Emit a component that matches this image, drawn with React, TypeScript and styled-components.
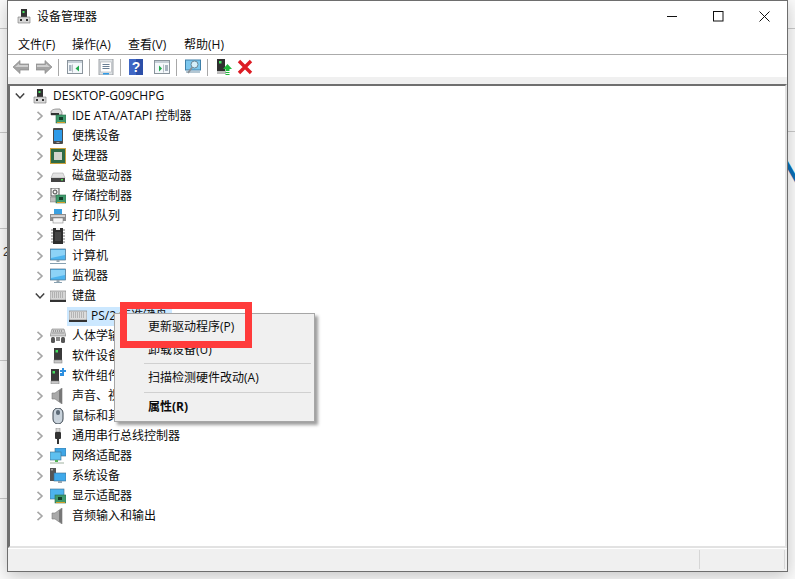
import React from "react";
import styled, { createGlobalStyle } from "styled-components";

const Global = createGlobalStyle`
  html, body { margin: 0; padding: 0; background: #fff; overflow: hidden; }
  #root { width: 795px; height: 579px; }
`;
const FONT = `"Open Sans", "Noto Sans CJK SC", sans-serif`;

const Desktop = styled.div`
  position: relative; width: 795px; height: 579px; overflow: hidden; background: #fbfbfb;
  font-family: ${FONT}; font-size: 12px; color: #0c0c0c;
`;
const BackLine = styled.div<{ $top: number; $right?: boolean }>`
  position: absolute; top: ${p => p.$top}px; height: 1px; width: 8px; background: #c9c9c9;
  ${p => (p.$right ? "right: 0;" : "left: 0;")}
`;
const BackDigit = styled.span`
  position: absolute; left: 3px; top: 245px; font: 12px "Liberation Sans", sans-serif; color: #333;
`;
const BackLetter = styled.span`
  position: absolute; left: 779px; top: 152px; font: 700 35px/40px "Liberation Sans", sans-serif; color: #0a6fb5;
`;
const Window = styled.div`
  position: absolute; left: 7px; top: 0; width: 781px; height: 572px; box-sizing: border-box;
  border: 1px solid #6e6e6e; background: #fff; display: flex; flex-direction: column;
  box-shadow: 0 4px 16px rgba(0,0,0,.22);
`;
const TitleBar = styled.div`
  height: 32px; flex: none; display: flex; align-items: center; padding-left: 8px; gap: 5px; font-size: 12px; padding-bottom: 2px; box-sizing: border-box;
`;
const TitleText = styled.span`flex: 1;`;
const Controls = styled.div`display: flex; align-items: center; margin-right: 17px; gap: 35px;`;
const MenuBar = styled.div`
  height: 22px; flex: none; display: flex; align-items: center; padding-left: 0; box-sizing: border-box;
  border-bottom: 1px solid #ababab;
`;
const MenuItem = styled.span<{ $w?: number }>`
  width: ${p => p.$w ?? 56}px; padding-left: 10px; box-sizing: border-box; white-space: nowrap; font-size: 12px;
`;
const Toolbar = styled.div`
  height: 22px; flex: none; display: flex; align-items: center; padding: 2px 0 0 5px; box-sizing: border-box; background: #fff;
`;
const ToolSep = styled.i`display: block; width: 1px; height: 17px; background: #a8a8a8; margin: 0 8px 0 6px;`;
const ToolBtn = styled.span<{ $gap?: number }>`display: flex; width: 16px; height: 16px; margin-right: ${p => p.$gap ?? 0}px;`;
const Strip = styled.div`height: 7px; flex: none; background: #f0f0f0;`;
const TreePane = styled.div`
  flex: 1; min-height: 0; box-sizing: border-box; background: #fff; position: relative;
  border-top: 2px solid #6f6f6f; border-left: 2px solid #6f6f6f; border-right: 2px solid #e2e2e2; border-bottom: 2px solid #e2e2e2;
`;
const Row = styled.div<{ $indent: number }>`
  height: 20px; display: flex; align-items: center; margin-left: ${p => p.$indent}px; white-space: nowrap;
`;
const Chevron = styled.span`display: flex; width: 14px; height: 20px; align-items: center; justify-content: center; flex: none;`;
const IconSlot = styled.span<{ $before?: number; $after?: number }>`
  display: flex; width: 18px; height: 16px; justify-content: center; flex: none;
  margin-left: ${p => p.$before ?? 0}px; margin-right: ${p => p.$after ?? 4}px;
`;
const Label = styled.span`line-height: 20px; padding-bottom: 1px; font-size: 12px;`;
const SelectedLabel = styled.span`
  display: flex; align-items: center; height: 19px; width: 105px; background: #cce8ff; padding-left: 2px; box-sizing: border-box; white-space: nowrap;
`;
const StatusBar = styled.div`
  height: 22px; flex: none; display: flex; justify-content: flex-end; background: #f0f0f0; border-top: 1px solid #fff;
`;
const StatusCell = styled.div<{ $w: number }>`
  width: ${p => p.$w}px; box-sizing: border-box; border-right: 1px solid #d6d6d6; border-left: 1px solid #d6d6d6; margin: 1px 2px 2px 0;
`;
const Menu = styled.div`
  position: absolute; left: 114px; top: 313px; width: 201px; height: 109px; box-sizing: border-box;
  background: #f0f0f0; border: 1px solid #a6a6a6; box-shadow: 3px 3px 3px rgba(0,0,0,.38);
  padding: 1px 2px 0 2px; display: flex; flex-direction: column;
`;
const MenuRow = styled.div<{ $bold?: boolean; $h: number }>`
  height: ${p => p.$h}px; line-height: ${p => p.$h}px; padding-left: 31px; font-size: 12px; flex: none; white-space: nowrap;
  font-weight: ${p => (p.$bold ? 700 : 400)};
`;
const MenuSep = styled.div<{ $top?: number }>`
  height: 1px; background: #d0d0d0; margin: ${p => p.$top ?? 0}px 1px 0 27px; flex: none;
`;
const RedFrame = styled.div`
  position: absolute; left: 120px; top: 302px; width: 132px; height: 46px; box-sizing: border-box;
  border: 7px solid #ff3b3b;
`;

const Svg = ({ children, w = 16, h = 16 }: { children: React.ReactNode; w?: number; h?: number }) => (
  <svg width={w} height={h} viewBox={`0 0 ${w} ${h}`}>{children}</svg>
);

const ChevronRight = () => (
  <svg width="8" height="10" viewBox="0 0 8 10"><path d="M1.5 .8 6 5 1.5 9.2" fill="none" stroke="#a6a6a6" strokeWidth="1.6" /></svg>
);
const ChevronDown = () => (
  <svg width="10" height="8" viewBox="0 0 10 8"><path d="M.8 1.5 5 6 9.2 1.5" fill="none" stroke="#404040" strokeWidth="1.5" /></svg>
);

const Tower = () => (
  <Svg><path d="M5 1h6v9H5z" fill="#333" /><rect x="6.5" y="3" width="2" height="2" fill="#48e060" /><path d="M2 9h12v6H2z" fill="#d8d8d8" stroke="#777" strokeWidth=".6" /><rect x="4" y="11" width="2" height="2" fill="#333" /><rect x="10" y="11" width="2" height="2" fill="#333" /></Svg>
);
const Board = ({ x = 6, y = 7 }: { x?: number; y?: number }) => (
  <g><rect x={x} y={y} width="10" height="8" fill="#3f9a6d" stroke="#2b6f4a" strokeWidth=".6" /><rect x={x + 3} y={y + 2} width="4" height="3" fill="#143d2a" /><rect x={x + 1} y={y + 7} width="8" height="1" fill="#d8a02a" /></g>
);
const Ide = () => (
  <Svg><path d="M1 4c0-2 3-3 6-3h3l2 3v3H1z" fill="#d9d9d9" stroke="#666" strokeWidth=".6" /><rect x="1" y="5" width="8" height="2" fill="#333" /><Board /></Svg>
);
const Portable = () => (
  <Svg><rect x="3" y="0" width="10" height="16" rx="1" fill="#4a4a4a" /><rect x="4" y="2" width="8" height="11" fill="#2f9be8" /><rect x="6.5" y="14" width="3" height="1" fill="#aaa" /></Svg>
);
const Cpu = () => (
  <Svg><rect x="0" y="0" width="16" height="16" fill="#c9a23c" /><rect x="1" y="1" width="14" height="14" fill="#2f6b46" /><rect x="4" y="4" width="8" height="8" fill="#d4d4cc" /></Svg>
);
const Disk = () => (
  <Svg><path d="M3 5h10l2 5H1z" fill="#e2e2e2" stroke="#9a9a9a" strokeWidth=".5" /><rect x="1" y="10" width="14" height="4" fill="#444" /><rect x="11" y="11" width="2" height="1.5" fill="#4ce04c" /></Svg>
);
const Storage = () => (
  <Svg><rect x="1" y="0" width="8" height="8" fill="#f2f2f2" stroke="#555" /><circle cx="5" cy="4" r="2" fill="none" stroke="#444" /><path d="M0 9h7v5H0z" fill="#bcbcbc" stroke="#777" strokeWidth=".5" /><Board x={6} y={7} /></Svg>
);
const Printer = () => (
  <Svg><rect x="4" y="1" width="8" height="5" fill="#3aa0e0" /><path d="M0 6h16v7H0z" fill="#8d8d8d" /><rect x="1" y="7" width="14" height="2" fill="#d0d0d0" /><rect x="3" y="10" width="10" height="5" fill="#f7f7f7" stroke="#777" strokeWidth=".5" /></Svg>
);
const Chip = () => (
  <Svg><rect x="3" y="0" width="10" height="16" fill="#2e2e2e" /><path d="M1 2h2M1 5h2M1 8h2M1 11h2M1 14h2M13 2h2M13 5h2M13 8h2M13 11h2M13 14h2" stroke="#777" /><path d="M6 0h4v2H6z" fill="#eee" /><rect x="5" y="4" width="6" height="9" fill="#444" /></Svg>
);
const Monitor = ({ line = false }: { line?: boolean }) => (
  <Svg><rect x=".5" y="1" width="15" height="11" fill="#4db4ef" stroke="#4a6f8a" strokeWidth=".7" /><path d="M1 2h14v5L1 10z" fill="#8dd3f7" /><rect x="6.5" y="12" width="3" height="2" fill="#9aa7b0" />{line ? <rect x="0" y="15" width="16" height="1" fill="#88a0b0" /> : <rect x="4" y="14" width="8" height="1" fill="#88a0b0" />}</Svg>
);
const Keyboard = () => (
  <Svg><path d="M0 3h16v9H0z" fill="#d6d6d6" stroke="#777" strokeWidth=".6" /><path d="M2 5h12M2 7h12M2 9h12" stroke="#8d8d8d" strokeDasharray="1 1" /><rect x="0" y="12" width="16" height="2" fill="#333" /></Svg>
);
const Keyboard18 = () => (
  <Svg w={18}><path d="M0 3h18v9H0z" fill="#dcdcdc" stroke="#777" strokeWidth=".6" /><path d="M2 5h14M2 7h14M2 9h14" stroke="#8d8d8d" strokeDasharray="1 1" /><rect x="0" y="12" width="18" height="2" fill="#333" /></Svg>
);
const Human = () => (
  <Svg><path d="M2 1h12l2 7H0z" fill="#cfcfcf" stroke="#666" strokeWidth=".5" /><path d="M3 3h10M2.5 5h11" stroke="#666" strokeDasharray="1 1" /><rect x="1" y="9" width="4" height="6" rx="1.5" fill="#555" /><rect x="6" y="9" width="4" height="4" fill="#888" /><rect x="11" y="9" width="4" height="6" rx="1.5" fill="#555" /></Svg>
);
const SoftDev = () => (
  <Svg><rect x="4" y="0" width="8" height="12" fill="#3a3a3a" /><rect x="5.5" y="2" width="2.5" height="2.5" fill="#45e060" /><rect x="4" y="12" width="8" height="3" fill="#c8c8c8" stroke="#777" strokeWidth=".5" /></Svg>
);
const SoftComp = () => (
  <Svg><rect x="1" y="1" width="8" height="12" fill="#3a3a3a" /><rect x="2.5" y="3" width="2.5" height="2.5" fill="#45e060" /><rect x="1" y="13" width="8" height="3" fill="#c8c8c8" stroke="#777" strokeWidth=".5" /><path d="M10 2h2V0h2v2h2v2h-2v2h-2V4h-2z" fill="#2d8fe0" /><rect x="10" y="5" width="4" height="3" fill="#2d8fe0" /></Svg>
);
const Speaker = () => (
  <Svg><path d="M2 5h3l7-5v16l-7-5H2z" fill="#a9a9a9" stroke="#7a7a7a" strokeWidth=".6" /><path d="M9 2.5v11l3 2V.5z" fill="#777" /></Svg>
);
const Mouse = () => (
  <Svg><rect x="3" y="0" width="10" height="16" rx="5" fill="#c9d3dc" stroke="#3c4650" /><rect x="6" y="2" width="4" height="5" rx="2" fill="#5d6b78" /></Svg>
);
const Usb = () => (
  <Svg><rect x="6" y="0" width="4" height="4" fill="#d8d8d8" stroke="#777" strokeWidth=".5" /><rect x="5" y="4" width="6" height="7" rx="1" fill="#333" /><rect x="7" y="11" width="2" height="5" fill="#333" /></Svg>
);
const Network = () => (
  <Svg><rect x="5" y="0" width="11" height="8" fill="#3fa6e6" stroke="#3e6d8e" strokeWidth=".6" /><rect x="0" y="4" width="11" height="8" fill="#5ec0f0" stroke="#3e6d8e" strokeWidth=".6" /><rect x="5" y="12" width="3" height="2" fill="#54b354" /><rect x="0" y="14" width="14" height="2" fill="#cfd8cf" /></Svg>
);
const SysDev = () => (
  <Svg><rect x="0" y="0" width="6" height="13" fill="#555" /><rect x="1" y="1" width="2" height="1.5" fill="#aaa" /><rect x="4" y="5" width="12" height="8" fill="#3fa9ea" stroke="#3e6d8e" strokeWidth=".6" /><rect x="8" y="13" width="4" height="2" fill="#9aa7b0" /></Svg>
);
const Display = () => (
  <Svg><rect x="0" y="1" width="14" height="10" fill="#4db4ef" stroke="#3e6d8e" strokeWidth=".6" /><rect x="5" y="7" width="11" height="8" fill="#3f9a6d" stroke="#2b6f4a" strokeWidth=".6" /><rect x="8" y="9" width="4" height="3" fill="#143d2a" /><rect x="6" y="14" width="9" height="1" fill="#d8a02a" /></Svg>
);

const Arrow = ({ flip }: { flip?: boolean }) => (
  <svg width="16" height="16" viewBox="0 0 16 16" style={flip ? { transform: "scaleX(-1)" } : undefined}>
    <path d="M0 8 7 1.5V5h9v6H7v3.5z" fill="#a4a4a4" stroke="#8a8a8a" strokeWidth=".7" />
    <path d="M2 8 6 4.5V6h9v2H3z" fill="#cfcfcf" />
  </svg>
);
const WinIcon = ({ mark, right }: { mark: string; right?: boolean }) => (
  <Svg>
    <rect x=".5" y="1.5" width="15" height="13" fill="#f4f8fb" stroke="#8a949c" />
    <rect x="1" y="2" width="14" height="2" fill="#c5ced6" />
    <path d={right ? "M9.5 5.5v8" : "M5.5 5.5v8"} stroke="#b7bec4" />
    <path d={right ? "M11 7h3M11 9h3M11 11h3" : "M2 7h2.5M2 9h2.5M2 11h2.5"} stroke="#5a6f85" />
    <path d={right ? "M5 6.5 8 9.5 5 12.5z" : "M12 6.5 8.5 9.5 12 12.5z"} fill={mark} />
  </Svg>
);
const Props = () => (
  <Svg>
    <rect x="1" y="0" width="14" height="16" fill="#dfe3e6" stroke="#8a8f94" strokeWidth=".8" />
    <rect x="2.5" y="3" width="11" height="10" fill="#fff" stroke="#aab0b5" strokeWidth=".6" />
    <path d="M4.5 5.5h7M4.5 7.5h7M4.5 9.5h7" stroke="#6a7f95" />
    <rect x="5" y="14" width="6" height="1.5" fill="#2f9be8" />
  </Svg>
);
const Help = () => (
  <Svg w={14}>
    <rect width="14" height="16" fill="#2c4fa8" />
    <rect width="7" height="16" fill="#3f66c4" />
    <text x="7" y="13" textAnchor="middle" fontFamily="Liberation Sans" fontWeight="700" fontSize="14" fill="#fff">?</text>
  </Svg>
);
const Scan = () => (
  <Svg>
    <rect x=".5" y="1" width="15" height="10" fill="#7cc7ee" stroke="#3e7fa8" />
    <path d="M1 13h14" stroke="#9bb4c4" strokeWidth="1.5" />
    <circle cx="9.5" cy="5.5" r="3.5" fill="#d6effa" stroke="#6b8796" />
    <path d="M7 8.5 3 14" stroke="#8a8f94" strokeWidth="1.8" />
  </Svg>
);
const UpdateDrv = () => (
  <Svg>
    <rect x="1" y="0" width="8" height="12" fill="#2f2f2f" />
    <rect x="3" y="2" width="2.5" height="2.5" fill="#45e060" />
    <rect x="1" y="12" width="9" height="3" fill="#bdbdbd" />
    <path d="M11.5 5 16 10h-2.5v2h-4v-2H7z" fill="#1fb83a" />
    <path d="M9.5 13h4v1h-4zM9.5 15h4v1h-4z" fill="#1fb83a" />
  </Svg>
);
const RedX = () => (
  <Svg><path d="M2 2 14 14M14 2 2 14" stroke="#dd1c24" strokeWidth="3.4" /></Svg>
);

type Item = { label: string; icon: React.ReactNode; open?: boolean };
const before: Item[] = [
  { label: "IDE ATA/ATAPI 控制器", icon: <Ide /> },
  { label: "便携设备", icon: <Portable /> },
  { label: "处理器", icon: <Cpu /> },
  { label: "磁盘驱动器", icon: <Disk /> },
  { label: "存储控制器", icon: <Storage /> },
  { label: "打印队列", icon: <Printer /> },
  { label: "固件", icon: <Chip /> },
  { label: "计算机", icon: <Monitor line /> },
  { label: "监视器", icon: <Monitor /> },
  { label: "键盘", icon: <Keyboard />, open: true },
];
const after: Item[] = [
  { label: "人体学输入设备", icon: <Human /> },
  { label: "软件设备", icon: <SoftDev /> },
  { label: "软件组件", icon: <SoftComp /> },
  { label: "声音、视频和游戏控制器", icon: <Speaker /> },
  { label: "鼠标和其他指针设备", icon: <Mouse /> },
  { label: "通用串行总线控制器", icon: <Usb /> },
  { label: "网络适配器", icon: <Network /> },
  { label: "系统设备", icon: <SysDev /> },
  { label: "显示适配器", icon: <Display /> },
  { label: "音频输入和输出", icon: <Speaker /> },
];

const TreeRow = ({ item }: { item: Item }) => (
  <Row $indent={23}>
    <Chevron>{item.open ? <ChevronDown /> : <ChevronRight />}</Chevron>
    <IconSlot $before={2} $after={5}>{item.icon}</IconSlot>
    <Label>{item.label}</Label>
  </Row>
);

export default function App() {
  return (
    <>
      <Global />
      <Desktop>
        {[28, 132, 228, 360, 498].map(t => <BackLine key={t} $top={t} />)}
        {[28, 131].map(t => <BackLine key={t} $top={t} $right />)}
        <BackDigit>2</BackDigit>
        <BackLetter>N</BackLetter>
        <Window>
          <TitleBar>
            <Tower />
            <TitleText>设备管理器</TitleText>
            <Controls>
              <svg width="11" height="11" viewBox="0 0 11 11"><path d="M0 5.5h10" stroke="#111" /></svg>
              <svg width="11" height="11" viewBox="0 0 11 11"><rect x=".5" y=".5" width="9.5" height="9.5" fill="none" stroke="#111" /></svg>
              <svg width="11" height="11" viewBox="0 0 11 11"><path d="M.5.5l10 10M10.5.5l-10 10" stroke="#111" /></svg>
            </Controls>
          </TitleBar>
          <MenuBar>
            <MenuItem $w={54}>文件(F)</MenuItem>
            <MenuItem>操作(A)</MenuItem>
            <MenuItem>查看(V)</MenuItem>
            <MenuItem>帮助(H)</MenuItem>
          </MenuBar>
          <Toolbar>
            <ToolBtn $gap={7}><Arrow /></ToolBtn>
            <ToolBtn><Arrow flip /></ToolBtn>
            <ToolSep />
            <ToolBtn><WinIcon mark="#1fa84a" /></ToolBtn>
            <ToolSep />
            <ToolBtn><Props /></ToolBtn>
            <ToolSep />
            <ToolBtn $gap={9}><Help /></ToolBtn>
            <ToolBtn><WinIcon mark="#1fa84a" right /></ToolBtn>
            <ToolSep />
            <ToolBtn><Scan /></ToolBtn>
            <ToolSep />
            <ToolBtn $gap={5}><UpdateDrv /></ToolBtn>
            <ToolBtn><RedX /></ToolBtn>
          </Toolbar>
          <Strip />
          <TreePane>
            <Row $indent={3}>
              <Chevron><ChevronDown /></Chevron>
              <IconSlot $before={4}><Tower /></IconSlot>
              <Label>DESKTOP-G09CHPG</Label>
            </Row>
            {before.map(i => <TreeRow key={i.label} item={i} />)}
            <Row $indent={57}>
              <SelectedLabel>
                <IconSlot><Keyboard18 /></IconSlot>
                <Label>PS/2 标准键盘</Label>
              </SelectedLabel>
            </Row>
            {after.map(i => <TreeRow key={i.label} item={i} />)}
          </TreePane>
          <StatusBar>
            <StatusCell $w={86} />
          </StatusBar>
        </Window>
        <Menu>
          <MenuRow $h={24}>更新驱动程序(P)</MenuRow>
          <MenuRow $h={22}>卸载设备(U)</MenuRow>
          <MenuSep $top={2} />
          <MenuRow $h={28}>扫描检测硬件改动(A)</MenuRow>
          <MenuSep />
          <MenuRow $h={28} $bold>属性(R)</MenuRow>
        </Menu>
        <RedFrame />
      </Desktop>
    </>
  );
}
